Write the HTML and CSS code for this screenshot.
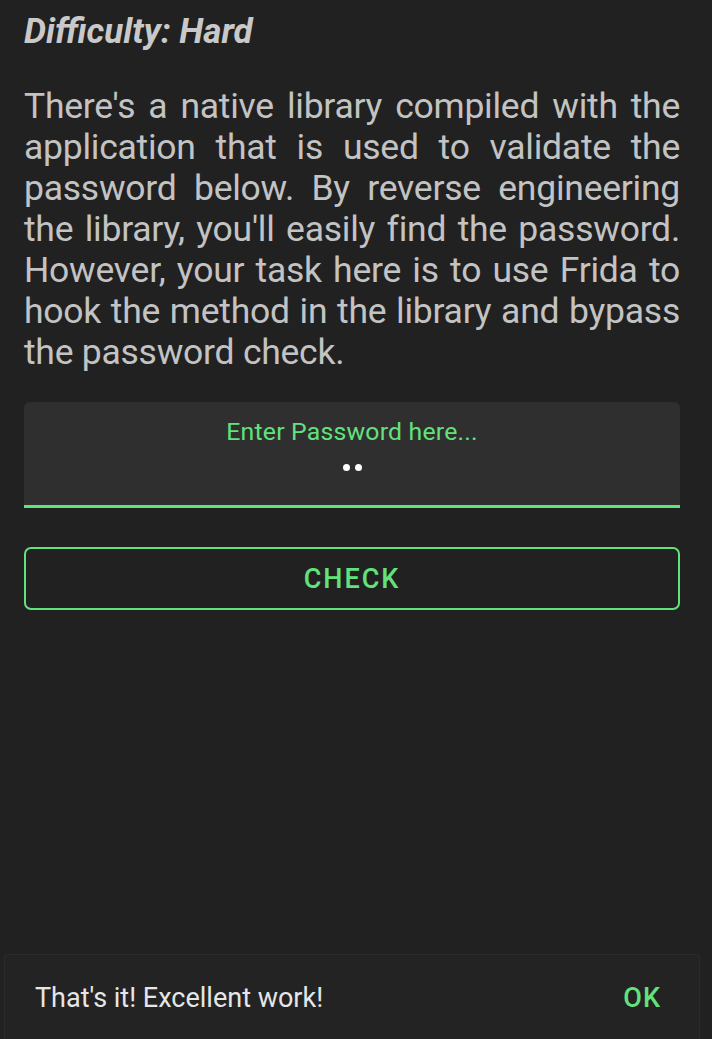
FILE: index.html
```html
<!DOCTYPE html>
<html>
<head>
<meta charset="utf-8">
<link rel="stylesheet" href="styles.css">
</head>
<body>
<main class="page">
  <h1 class="title">Difficulty: Hard</h1>
  <p class="desc">There's a native library compiled with the application that is used to validate the password below. By reverse engineering the library, you'll easily find the password. However, your task here is to use Frida to hook the method in the library and bypass the password check.</p>
  <div class="field">
    <div class="field-label">Enter Password here...</div>
    <div class="field-value"><span class="dot"></span><span class="dot"></span></div>
  </div>
  <button class="check">CHECK</button>
</main>
<div class="snackbar">
  <span class="snack-text">That's it! Excellent work!</span>
  <span class="snack-action">OK</span>
</div>
</body>
</html>
```

FILE: styles.css
```css
html, body {
  margin: 0;
  padding: 0;
  background: #212121;
  height: 100%;
}
body {
  font-family: Roboto, "Noto Sans", sans-serif;
  position: relative;
  overflow: hidden;
}
.page {
  padding: 0 32px 0 24px;
  display: flex;
  flex-direction: column;
}
.title {
  margin: 12px 0 0 0;
  font-size: 35px;
  line-height: 40px;
  font-weight: 700;
  font-style: italic;
  color: #c9c9c9;
}
.desc {
  margin: 34px 0 0 0;
  font-size: 35.5px;
  line-height: 41px;
  letter-spacing: -0.25px;
  color: #c3c3c3;
  text-align: justify;
}
.field {
  margin-top: 29px;
  height: 103px;
  background: #2f2f2f;
  border-radius: 6px 6px 0 0;
  border-bottom: 3px solid #62e27c;
  display: flex;
  flex-direction: column;
  align-items: center;
}
.field-label {
  margin-top: 15px;
  font-size: 24.8px;
  line-height: 29px;
  color: #62e27c;
  letter-spacing: 0.2px;
}
.field-value {
  margin-top: 18px;
  display: flex;
  gap: 5px;
}
.dot {
  width: 7px;
  height: 7px;
  border-radius: 50%;
  background: #ffffff;
}
.check {
  margin-top: 39px;
  height: 63px;
  background: transparent;
  border: 2px solid #62e27c;
  border-radius: 7px;
  color: #62e27c;
  font-family: Roboto, "Noto Sans", sans-serif;
  font-size: 27px;
  font-weight: 500;
  letter-spacing: 2px;
  padding: 0;
}
.snackbar {
  position: absolute;
  left: 4px;
  width: 696px;
  top: 954px;
  height: 100px;
  background: #232323;
  border: 1px solid #2b2b2b;
  border-radius: 4px;
  box-sizing: border-box;
  display: flex;
  align-items: flex-start;
  justify-content: space-between;
  padding: 27px 38px 0 30px;
}
.snack-text {
  font-size: 27px;
  line-height: 32px;
  color: #e6e6e6;
}
.snack-action {
  font-size: 27px;
  line-height: 32px;
  font-weight: 500;
  color: #62e27c;
  letter-spacing: 1px;
}
```
